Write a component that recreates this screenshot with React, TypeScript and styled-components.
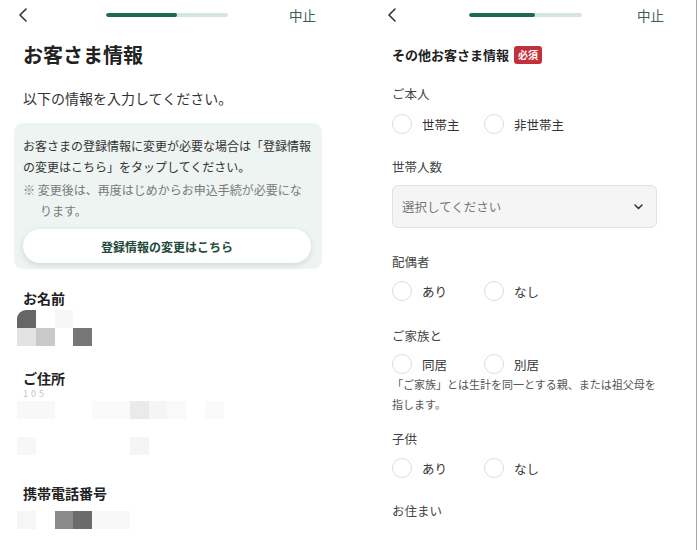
import React from "react";
import styled, {createGlobalStyle} from "styled-components";

const GlobalStyle = createGlobalStyle`
    html, body {
        margin: 0;
        padding: 0;
        background: #FFFFFF;
    }

    body {
        font-family: "Noto Sans CJK JP", "Noto Sans", sans-serif;
        color: #333333;
    }
`

const Page = styled.div`
    display: flex;
    width: 700px;
    height: 550px;
    overflow: hidden;
`

const Screen = styled.div<{ $width: number; $offset: number; $edge?: boolean }>`
    box-sizing: border-box;
    width: ${p => p.$width}px;
    margin-left: ${p => p.$offset}px;
    height: 550px;
    overflow: hidden;
    border-right: ${p => (p.$edge ? "1px solid #A8A8A8" : "none")};
`

const Header = styled.div<{ $lead: number; $barGap: number; $barWidth: number; $right: number }>`
    display: grid;
    grid-template-columns: ${p => p.$barGap}px ${p => p.$barWidth}px 1fr;
    align-items: center;
    height: 30px;
    padding: 0 ${p => p.$right}px 0 ${p => p.$lead}px;
`

const Back = styled.svg`
    display: block;
    width: 10px;
    height: 14px;
`

const Progress = styled.div`
    height: 4px;
    border-radius: 2px;
    background: #D4E6E1;
    overflow: hidden;
`

const ProgressFill = styled.div`
    height: 100%;
    background: #1C6A50;
    border-radius: 2px;
`

const Quit = styled.span`
    justify-self: end;
    font-size: 13.5px;
    color: #3E5D53;
    line-height: 20px;
`

const Body = styled.div<{ $left: number; $right: number }>`
    padding: 0 ${p => p.$right}px 0 ${p => p.$left}px;
`

const Title = styled.h1`
    margin: 11px 0 0;
    font-size: 20px;
    line-height: 28px;
    font-weight: 700;
    color: #222222;
`

const Lead = styled.p`
    margin: 19px 0 0;
    font-size: 14px;
    line-height: 20px;
    color: #333333;
`

const InfoBox = styled.div`
    margin: 15px -11px 0 -9px;
    padding: 12px 11px 6px 9px;
    background: #EDF4F2;
    border-radius: 9px;
`

const InfoText = styled.p`
    margin: 0;
    font-size: 12px;
    line-height: 21px;
    color: #333333;
`

const InfoNote = styled.p`
    margin: 2px 0 0;
    padding-left: 17px;
    text-indent: -17px;
    font-size: 12px;
    line-height: 21px;
    color: #7A7A7A;
`

const PillButton = styled.button`
    display: block;
    width: 100%;
    height: 34px;
    margin-top: 8px;
    border: none;
    border-radius: 17px;
    background: #FFFFFF;
    box-shadow: 0 2px 6px rgba(0, 0, 0, 0.12);
    font-family: inherit;
    font-size: 12px;
    font-weight: 700;
    color: #1F4A3B;
`

const InfoLabel = styled.div<{ $top: number }>`
    margin-top: ${p => p.$top}px;
    font-size: 14px;
    line-height: 20px;
    font-weight: 700;
    color: #222222;
`

const Mosaic = styled.div<{ $top: number }>`
    display: grid;
    grid-template-columns: repeat(16, 18.8px);
    grid-auto-rows: 18px;
    margin: ${p => p.$top}px 0 0 -6px;
`

const Tile = styled.div<{ $color: string; $round?: boolean }>`
    background: ${p => p.$color};
    border-top-left-radius: ${p => (p.$round ? "9px" : "0")};
`

const FaintDigits = styled.div`
    font-size: 9px;
    line-height: 12px;
    color: #C4C4C4;
    letter-spacing: 3px;
`

const SectionTitle = styled.div`
    display: flex;
    align-items: center;
    gap: 5px;
    margin-top: 15px;
    font-size: 13px;
    line-height: 20px;
    font-weight: 700;
    color: #222222;
`

const Required = styled.span`
    display: inline-block;
    padding: 0 4px;
    height: 18px;
    line-height: 18px;
    border-radius: 3px;
    background: #C4303A;
    color: #FFFFFF;
    font-size: 10px;
    font-weight: 700;
`

const FieldLabel = styled.div<{ $top: number }>`
    margin-top: ${p => p.$top}px;
    font-size: 12.5px;
    line-height: 20px;
    color: #444444;
`

const RadioRow = styled.div<{ $top: number }>`
    display: flex;
    margin-top: ${p => p.$top}px;
    height: 20px;
`

const RadioOption = styled.label`
    display: flex;
    align-items: center;
    gap: 10px;
    min-width: 92px;
    font-size: 12.5px;
    color: #333333;
`

const RadioCircle = styled.span`
    box-sizing: border-box;
    width: 20px;
    height: 20px;
    border-radius: 50%;
    border: 1px solid #DCDCDC;
    background: #FFFFFF;
`

const Select = styled.div`
    box-sizing: border-box;
    display: flex;
    align-items: center;
    justify-content: space-between;
    height: 43px;
    margin-top: 8px;
    padding: 0 13px 0 9px;
    border: 1px solid #E2E2E2;
    border-radius: 6px;
    background: #F5F5F5;
    font-size: 12.5px;
    color: #777777;
`

const Note = styled.p`
    margin: 0;
    max-width: 270px;
    font-size: 11px;
    line-height: 20px;
    color: #555555;
`

type Row = { color: string; round?: boolean }[]

const nameMosaic: Row[] = [
    [{color: "#666666", round: true}, {color: "#FFFFFF"}, {color: "#F6F7F7"}, {color: "#FFFFFF"}],
    [{color: "#E2E3E3"}, {color: "#C8C9C9"}, {color: "#FFFFFF"}, {color: "#777777"}],
]

const addressMosaic: Row[] = [
    [{color: "#F8F8F8"}, {color: "#F8F8F8"}, {color: "#FFFFFF"}, {color: "#FFFFFF"}, {color: "#FAFAFA"}, {color: "#FAFAFA"},
        {color: "#EAEAEA"}, {color: "#F5F5F5"}, {color: "#F9F9F9"}, {color: "#FFFFFF"}, {color: "#FAFAFA"}],
    [],
    [{color: "#F7F7F7"}, {color: "#FFFFFF"}, {color: "#FFFFFF"}, {color: "#FFFFFF"}, {color: "#FFFFFF"}, {color: "#FFFFFF"},
        {color: "#F5F5F5"}],
]

const phoneMosaic: Row[] = [
    [{color: "#F6F6F6"}, {color: "#FFFFFF"}, {color: "#8A8A8A"}, {color: "#6B6B6B"}, {color: "#F8F8F8"}, {color: "#F8F8F8"}],
]

function MosaicBlock({rows, top}: { rows: Row[]; top: number }) {
    return (
        <Mosaic $top={top}>
            {rows.map((row, r) =>
                Array.from({length: 16}).map((_, c) => {
                    const t = row[c]
                    return <Tile key={`${r}-${c}`} $color={t ? t.color : "transparent"} $round={t?.round}/>
                })
            )}
        </Mosaic>
    )
}

function BackIcon() {
    return (
        <Back viewBox="0 0 10 14">
            <path d="M8 1 L2 7 L8 13" fill="none" stroke="#333333" strokeWidth="1.6" strokeLinecap="round" strokeLinejoin="round"/>
        </Back>
    )
}

function Radios({top, options}: { top: number; options: string[] }) {
    return (
        <RadioRow $top={top}>
            {options.map(o => (
                <RadioOption key={o}>
                    <RadioCircle/>
                    {o}
                </RadioOption>
            ))}
        </RadioRow>
    )
}

export default function App() {
    return (
        <Page>
            <GlobalStyle/>
            <Screen $width={334} $offset={0}>
                <Header $lead={18} $barGap={88} $barWidth={122} $right={18}>
                    <BackIcon/>
                    <Progress>
                        <ProgressFill style={{width: "58%"}}/>
                    </Progress>
                    <Quit>中止</Quit>
                </Header>
                <Body $left={23} $right={23}>
                    <Title>お客さま情報</Title>
                    <Lead>以下の情報を入力してください。</Lead>
                    <InfoBox>
                        <InfoText>お客さまの登録情報に変更が必要な場合は「登録情報の変更はこちら」をタップしてください。</InfoText>
                        <InfoNote>※&nbsp;変更後は、再度はじめからお申込手続が必要になります。</InfoNote>
                        <PillButton>登録情報の変更はこちら</PillButton>
                    </InfoBox>

                    <InfoLabel $top={19}>お名前</InfoLabel>
                    <MosaicBlock rows={nameMosaic} top={2}/>

                    <InfoLabel $top={22}>ご住所</InfoLabel>
                    <FaintDigits>105</FaintDigits>
                    <MosaicBlock rows={addressMosaic} top={1}/>

                    <InfoLabel $top={28}>携帯電話番号</InfoLabel>
                    <MosaicBlock rows={phoneMosaic} top={8}/>
                </Body>
            </Screen>

            <Screen $width={332} $offset={31} $edge>
                <Header $lead={22} $barGap={82} $barWidth={113} $right={32}>
                    <BackIcon/>
                    <Progress>
                        <ProgressFill style={{width: "58%"}}/>
                    </Progress>
                    <Quit>中止</Quit>
                </Header>
                <Body $left={27} $right={39}>
                    <SectionTitle>
                        その他お客さま情報
                        <Required>必須</Required>
                    </SectionTitle>

                    <FieldLabel $top={19}>ご本人</FieldLabel>
                    <Radios top={10} options={["世帯主", "非世帯主"]}/>

                    <FieldLabel $top={23}>世帯人数</FieldLabel>
                    <Select>
                        選択してください
                        <svg width="9" height="6" viewBox="0 0 9 6">
                            <path d="M1 1 L4.5 4.5 L8 1" fill="none" stroke="#333333" strokeWidth="1.5" strokeLinecap="round" strokeLinejoin="round"/>
                        </svg>
                    </Select>

                    <FieldLabel $top={24}>配偶者</FieldLabel>
                    <Radios top={9} options={["あり", "なし"]}/>

                    <FieldLabel $top={25}>ご家族と</FieldLabel>
                    <Radios top={8} options={["同居", "別居"]}/>
                    <Note>「ご家族」とは生計を同一とする親、または祖父母を指します。</Note>

                    <FieldLabel $top={15}>子供</FieldLabel>
                    <Radios top={9} options={["あり", "なし"]}/>

                    <FieldLabel $top={23}>お住まい</FieldLabel>
                </Body>
            </Screen>
        </Page>
    )
}
